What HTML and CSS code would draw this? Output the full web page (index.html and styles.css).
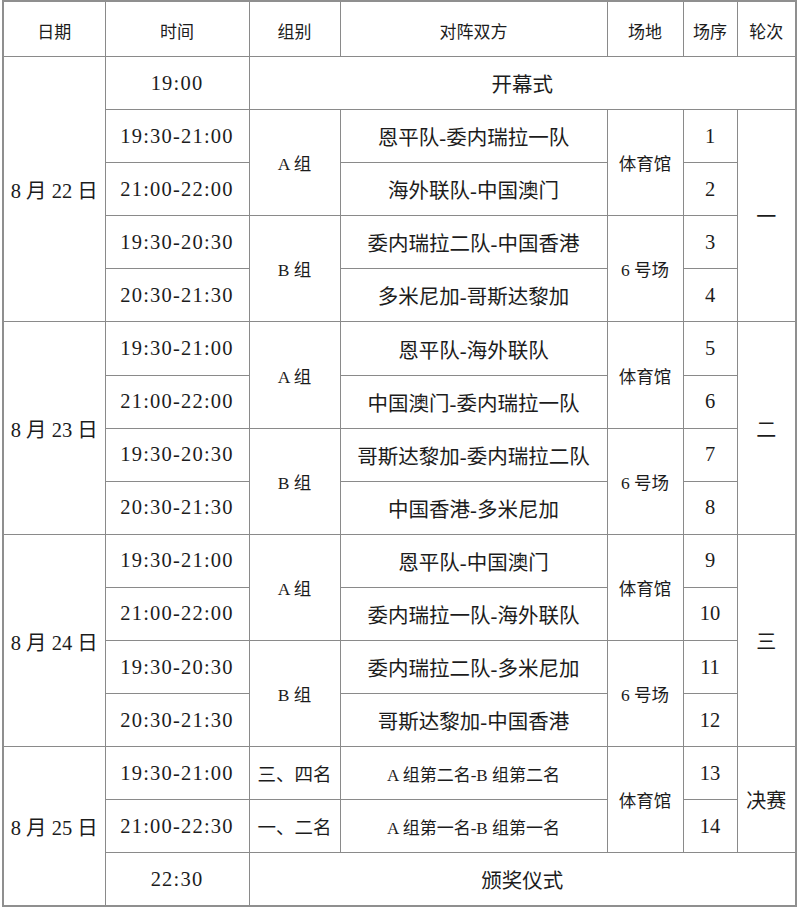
FILE: index.html
```html
<!DOCTYPE html>
<html lang="zh">
<head>
<meta charset="utf-8">
<title>赛程表</title>
<link rel="stylesheet" href="styles.css">
</head>
<body>
<div class="page">
<table class="sched">
  <colgroup>
    <col class="c-date"><col class="c-time"><col class="c-grp"><col class="c-match"><col class="c-venue"><col class="c-no"><col class="c-round">
  </colgroup>
  <thead>
    <tr class="head">
      <th>日期</th><th>时间</th><th>组别</th><th>对阵双方</th><th>场地</th><th>场序</th><th>轮次</th>
    </tr>
  </thead>
  <tbody>
    <tr>
      <td rowspan="5" class="date">8 月 22 日</td>
      <td class="time">19:00</td>
      <td colspan="5" class="big">开幕式</td>
    </tr>
    <tr>
      <td class="time">19:30-21:00</td>
      <td rowspan="2" class="grp">A 组</td>
      <td class="match">恩平队-委内瑞拉一队</td>
      <td rowspan="2" class="venue">体育馆</td>
      <td class="no">1</td>
      <td rowspan="4" class="round">一</td>
    </tr>
    <tr>
      <td class="time">21:00-22:00</td>
      <td class="match">海外联队-中国澳门</td>
      <td class="no">2</td>
    </tr>
    <tr>
      <td class="time">19:30-20:30</td>
      <td rowspan="2" class="grp">B 组</td>
      <td class="match">委内瑞拉二队-中国香港</td>
      <td rowspan="2" class="venue">6 号场</td>
      <td class="no">3</td>
    </tr>
    <tr>
      <td class="time">20:30-21:30</td>
      <td class="match">多米尼加-哥斯达黎加</td>
      <td class="no">4</td>
    </tr>

    <tr>
      <td rowspan="4" class="date">8 月 23 日</td>
      <td class="time">19:30-21:00</td>
      <td rowspan="2" class="grp">A 组</td>
      <td class="match">恩平队-海外联队</td>
      <td rowspan="2" class="venue">体育馆</td>
      <td class="no">5</td>
      <td rowspan="4" class="round">二</td>
    </tr>
    <tr>
      <td class="time">21:00-22:00</td>
      <td class="match">中国澳门-委内瑞拉一队</td>
      <td class="no">6</td>
    </tr>
    <tr>
      <td class="time">19:30-20:30</td>
      <td rowspan="2" class="grp">B 组</td>
      <td class="match">哥斯达黎加-委内瑞拉二队</td>
      <td rowspan="2" class="venue">6 号场</td>
      <td class="no">7</td>
    </tr>
    <tr>
      <td class="time">20:30-21:30</td>
      <td class="match">中国香港-多米尼加</td>
      <td class="no">8</td>
    </tr>

    <tr>
      <td rowspan="4" class="date">8 月 24 日</td>
      <td class="time">19:30-21:00</td>
      <td rowspan="2" class="grp">A 组</td>
      <td class="match">恩平队-中国澳门</td>
      <td rowspan="2" class="venue">体育馆</td>
      <td class="no">9</td>
      <td rowspan="4" class="round">三</td>
    </tr>
    <tr>
      <td class="time">21:00-22:00</td>
      <td class="match">委内瑞拉一队-海外联队</td>
      <td class="no">10</td>
    </tr>
    <tr>
      <td class="time">19:30-20:30</td>
      <td rowspan="2" class="grp">B 组</td>
      <td class="match">委内瑞拉二队-多米尼加</td>
      <td rowspan="2" class="venue">6 号场</td>
      <td class="no">11</td>
    </tr>
    <tr>
      <td class="time">20:30-21:30</td>
      <td class="match">哥斯达黎加-中国香港</td>
      <td class="no">12</td>
    </tr>

    <tr>
      <td rowspan="3" class="date">8 月 25 日</td>
      <td class="time">19:30-21:00</td>
      <td class="rank">三、四名</td>
      <td class="match small">A 组第二名-B 组第二名</td>
      <td rowspan="2" class="venue">体育馆</td>
      <td class="no">13</td>
      <td rowspan="2" class="round">决赛</td>
    </tr>
    <tr>
      <td class="time">21:00-22:30</td>
      <td class="rank">一、二名</td>
      <td class="match small">A 组第一名-B 组第一名</td>
      <td class="no">14</td>
    </tr>
    <tr>
      <td class="time">22:30</td>
      <td colspan="5" class="big">颁奖仪式</td>
    </tr>
  </tbody>
</table>
</div>
</body>
</html>
```

FILE: styles.css
```css
html, body {
  margin: 0;
  padding: 0;
  background: #ffffff;
}

.page {
  padding: 0 0 0 2px;
}

.sched {
  border-collapse: collapse;
  table-layout: fixed;
  width: 795px;
  font-family: "Liberation Serif", "Noto Sans CJK SC", serif;
  color: #1c1c1c;
  border: 2px solid #8f8f8f;
}

.c-date { width: 102px; }
.c-time { width: 144px; }
.c-grp { width: 91px; }
.c-match { width: 267px; }
.c-venue { width: 76px; }
.c-no { width: 54px; }
.c-round { width: 59px; }

.sched th,
.sched td {
  border: 1px solid #8a8a8a;
  padding: 0;
  text-align: center;
  vertical-align: middle;
  font-weight: normal;
  white-space: nowrap;
}

.head th {
  height: 52px;
  font-size: 17px;
  padding-top: 2px;
}

.sched tbody tr {
  height: 53.1px;
}

.date {
  font-size: 20.5px;
}

.time {
  font-size: 20.5px;
  letter-spacing: 1.2px;
}

.big {
  font-size: 20.5px;
}

.grp {
  font-size: 17.5px;
}

.rank {
  font-size: 18.5px;
}

.match {
  font-size: 20.5px;
}

.match.small {
  font-size: 17px;
}

.venue {
  font-size: 17.5px;
}

.no {
  font-size: 20.5px;
}

.round {
  font-size: 20px;
}
```
